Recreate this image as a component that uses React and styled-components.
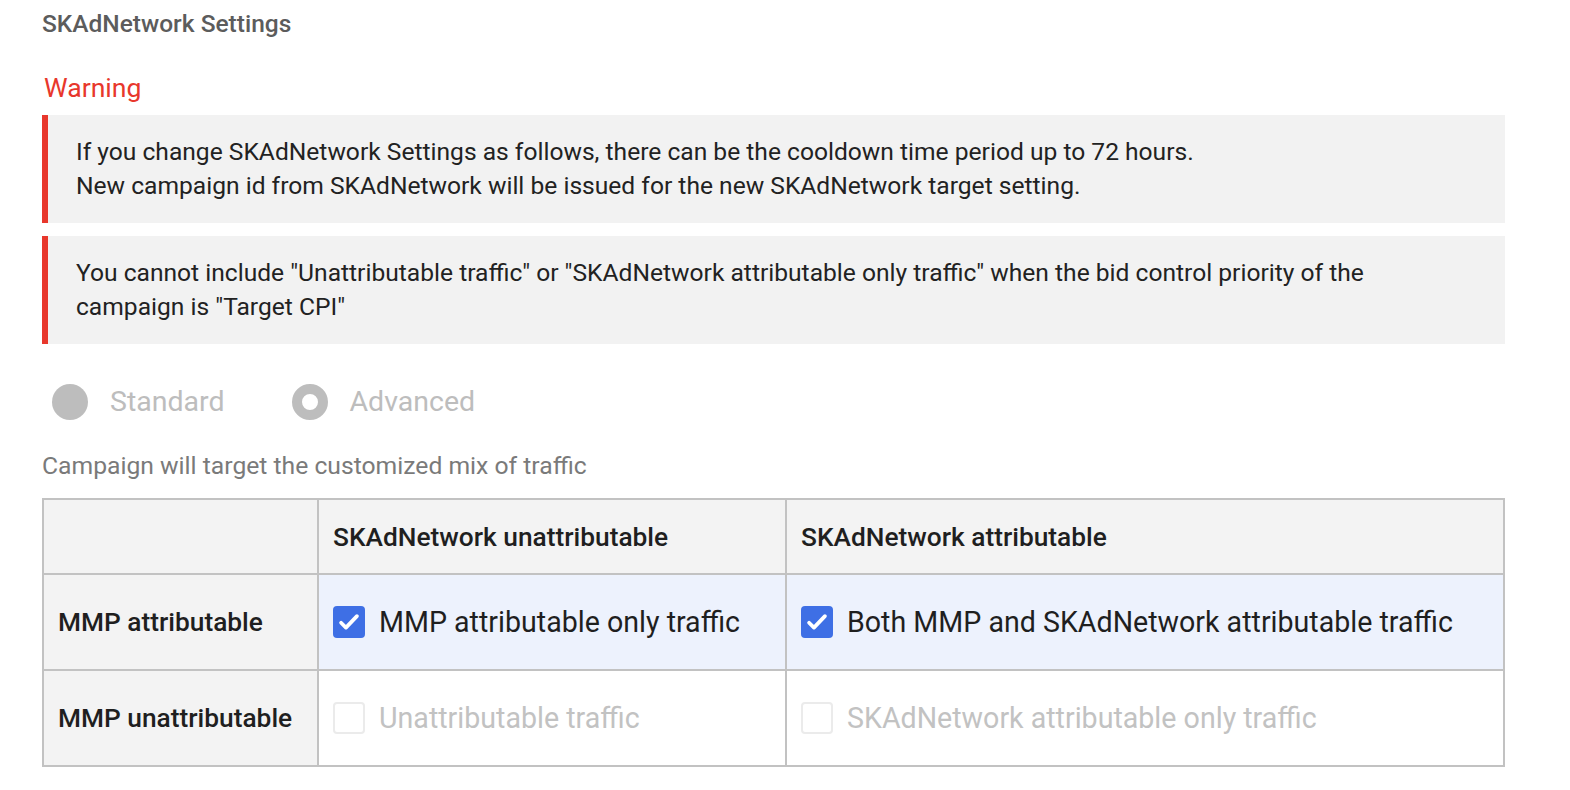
import React from "react";
import styled, { createGlobalStyle } from "styled-components";

const GlobalStyle = createGlobalStyle`
  body {
    margin: 0;
    background: #ffffff;
    font-family: Roboto, "Liberation Sans", Arial, sans-serif;
  }
`;

const Page = styled.div`
  width: 1463px;
  padding: 8px 0 0 42px;
`;

const Title = styled.h2`
  margin: 0;
  font-size: 24.5px;
  line-height: 32px;
  font-weight: 500;
  color: #5c5c5c;
`;

const WarningTitle = styled.h3`
  margin: 33px 0 0 2px;
  font-size: 26.6px;
  line-height: 30px;
  font-weight: 400;
  color: #e8372c;
`;

const Notices = styled.div`
  display: flex;
  flex-direction: column;
  gap: 13px;
  margin-top: 12px;
`;

const Notice = styled.div`
  background: #f2f2f2;
  border-left: 6px solid #e8372c;
  padding: 20px 80px 20px 28px;
  font-size: 24.6px;
  line-height: 34px;
  color: #222222;
`;

const RadioGroup = styled.div`
  display: flex;
  align-items: center;
  gap: 67px;
  margin-top: 40px;
  padding-left: 10px;
`;

const RadioOption = styled.label`
  display: flex;
  align-items: center;
  gap: 22px;
  font-size: 28.5px;
  line-height: 36px;
  color: #bdbdbd;
`;

const RadioDot = styled.span`
  width: 36px;
  height: 36px;
  border-radius: 50%;
  box-sizing: border-box;
  background: ${(p) => (p.$selected ? "#ffffff" : "#bdbdbd")};
  border: ${(p) => (p.$selected ? "10px solid #bdbdbd" : "none")};
`;

const Hint = styled.p`
  margin: 32px 0 0;
  font-size: 24.7px;
  line-height: 28px;
  color: #7a7a7a;
`;

const Table = styled.div`
  display: grid;
  grid-template-columns: 273px 466px 1fr;
  grid-template-rows: 73px 94px 94px;
  margin-top: 18px;
  border: 2px solid #c2c2c2;
  background: #c2c2c2;
  gap: 2px;
`;

const Cell = styled.div`
  display: flex;
  align-items: center;
  padding: 0 14px;
  background: ${(p) => p.$bg || "#ffffff"};
  font-size: ${(p) => (p.$bold ? "26.3px" : "28.6px")};
  font-weight: ${(p) => (p.$bold ? 500 : 400)};
  color: ${(p) => (p.$muted ? "#c2c2c2" : "#1f1f1f")};
  gap: 14px;
  white-space: nowrap;
`;

const Box = styled.span`
  flex: none;
  width: 32px;
  height: 32px;
  box-sizing: border-box;
  border-radius: 4px;
  display: flex;
  align-items: center;
  justify-content: center;
  background: ${(p) => (p.$checked ? "#3e6fe5" : "#ffffff")};
  border: ${(p) => (p.$checked ? "none" : "2px solid #ebebeb")};
`;

function Check({ checked }) {
  return (
    <Box $checked={checked}>
      {checked && (
        <svg width="28" height="28" viewBox="0 0 24 24">
          <path d="M5.2 12.6l4.2 4.2L18.8 7" fill="none" stroke="#ffffff" strokeWidth="3.2" strokeLinecap="round" strokeLinejoin="round" />
        </svg>
      )}
    </Box>
  );
}

const HEAD = "#f3f3f3";
const SELECTED = "#edf2fd";

export default function App() {
  return (
    <>
      <GlobalStyle />
      <Page>
        <Title>SKAdNetwork Settings</Title>
        <WarningTitle>Warning</WarningTitle>
        <Notices>
          <Notice>
            If you change SKAdNetwork Settings as follows, there can be the cooldown time period up to 72 hours.
            <br />
            New campaign id from SKAdNetwork will be issued for the new SKAdNetwork target setting.
          </Notice>
          <Notice>
            You cannot include "Unattributable traffic" or "SKAdNetwork attributable only traffic" when the bid control priority of the campaign is "Target CPI"
          </Notice>
        </Notices>
        <RadioGroup>
          <RadioOption>
            <RadioDot />
            Standard
          </RadioOption>
          <RadioOption>
            <RadioDot $selected />
            Advanced
          </RadioOption>
        </RadioGroup>
        <Hint>Campaign will target the customized mix of traffic</Hint>
        <Table>
          <Cell $bg={HEAD} />
          <Cell $bg={HEAD} $bold>SKAdNetwork unattributable</Cell>
          <Cell $bg={HEAD} $bold>SKAdNetwork attributable</Cell>

          <Cell $bg={HEAD} $bold>MMP attributable</Cell>
          <Cell $bg={SELECTED}>
            <Check checked />
            MMP attributable only traffic
          </Cell>
          <Cell $bg={SELECTED}>
            <Check checked />
            Both MMP and SKAdNetwork attributable traffic
          </Cell>

          <Cell $bg={HEAD} $bold>MMP unattributable</Cell>
          <Cell $muted>
            <Check />
            Unattributable traffic
          </Cell>
          <Cell $muted>
            <Check />
            SKAdNetwork attributable only traffic
          </Cell>
        </Table>
      </Page>
    </>
  );
}
